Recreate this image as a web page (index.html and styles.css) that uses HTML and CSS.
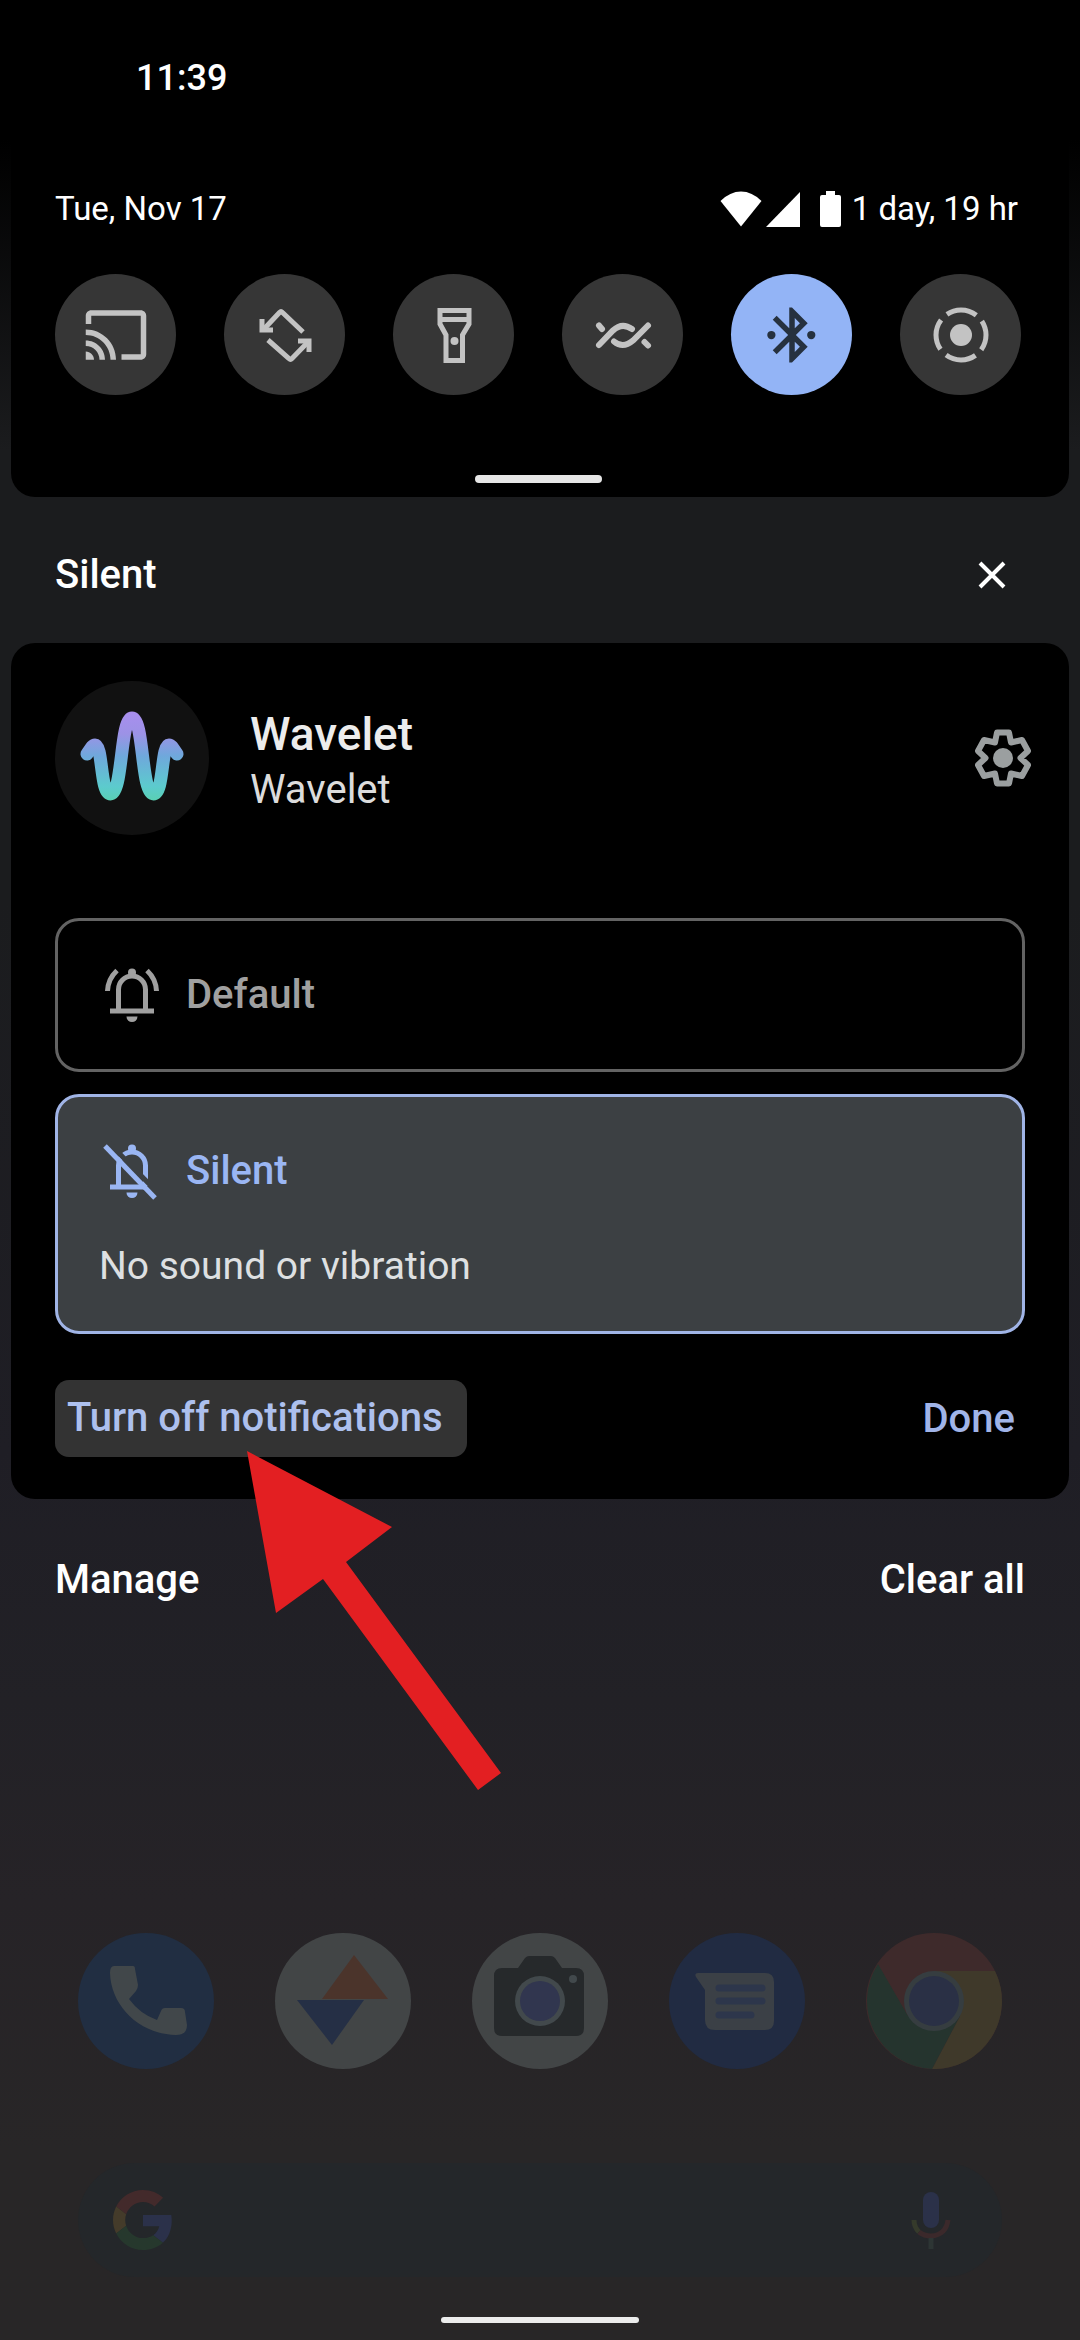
FILE: index.html
```html
<!DOCTYPE html>
<html lang="en">
<head>
  <meta charset="UTF-8">
  <meta name="viewport" content="width=device-width, initial-scale=1">
  <title>Notification shade</title>
  <link rel="stylesheet" href="styles.css">
</head>
<body>
  <div class="status-bar">11:39</div>

  <section class="quick-settings">
    <div class="qs-header">
      <span>Tue, Nov 17</span>
      <div class="system-icons">
        <svg width="42" height="36" viewBox="0 0 42 36"><path d="M21 35.500L0.500 10Q10 0.500 21 0.500T41.500 10Z"/></svg>
        <svg class="signal" width="34" height="36" viewBox="0 0 34 36"><path d="M34 1V36H0Z"/></svg>
        <svg width="22" height="36" viewBox="0 0 22 36"><path d="M6 0h9v4h4q2 0 2 2v28q0 2-2 2H2q-2 0-2-2V6q0-2 2-2h4z"/></svg>
        <span class="battery-text">1 day, 19 hr</span>
      </div>
    </div>

    <div class="tiles">
      <button class="tile" aria-label="Screen cast">
        <svg viewBox="0 0 24 24" fill="currentColor"><path d="M21 3H3c-1.100 0-2 .9-2 2v3h2V5h18v14h-7v2h7c1.100 0 2-.9 2-2V5c0-1.100-.9-2-2-2zM1 18v3h3c0-1.660-1.340-3-3-3zm0-4v2c2.760 0 5 2.240 5 5h2c0-3.870-3.130-7-7-7zm0-4v2c4.970 0 9 4.030 9 9h2c0-6.080-4.930-11-11-11z"/></svg>
      </button>
      <button class="tile" aria-label="Auto-rotate">
        <svg class="line" viewBox="-33 -33 66 66">
          <path d="M-21-6L-5.500-22.500Q-4-24-2.500-22.500L18-3"/>
          <path d="M-23-16V-5H-12"/>
          <path d="M-17 5L4 23.500Q5.500 25 7 23.500L23 7"/>
          <path d="M13 6H24V17"/>
        </svg>
      </button>
      <button class="tile" aria-label="Flashlight">
        <svg class="line" viewBox="-33 -33 66 66">
          <path d="M-14-24.500H15V-11L8.500 0V25.500H-8V0L-14-11Z"/>
          <path d="M-14-15.500H15"/>
          <circle cx="0.500" cy="6" r="4" fill="currentColor" stroke="none"/>
        </svg>
      </button>
      <button class="tile" aria-label="Mobile data">
        <svg class="line round" viewBox="-33 -33 66 66">
          <path d="M-24 10L-10-4.500Q-1-13 9-6"/>
          <path d="M25-9.500L10 5.500Q0 14 -9 6.500"/>
          <path d="M-24-9.500L-21-6"/>
          <path d="M21.500 7L25 10.500"/>
        </svg>
      </button>
      <button class="tile tile-on" aria-label="Bluetooth" aria-pressed="true">
        <svg viewBox="0 0 24 24" fill="currentColor"><path d="M17.710 7.710L12 2h-1v7.590L6.410 5 5 6.410 10.590 12 5 17.590 6.410 19 11 14.410V22h1l5.710-5.710-4.300-4.290 4.300-4.290zM13 5.830l1.880 1.880L13 9.590V5.830zm1.880 10.460L13 18.170v-3.760l1.880 1.880z"/><circle cx="4.500" cy="12" r="1.500"/><circle cx="19" cy="12" r="1.500"/></svg>
      </button>
      <button class="tile" aria-label="Screen record">
        <svg class="line" viewBox="-33 -33 66 66">
          <circle r="25" stroke-dasharray="31.270 8" stroke-dashoffset="15.635"/>
          <circle r="11" fill="currentColor" stroke="none"/>
        </svg>
      </button>
    </div>

    <div class="handle"></div>
  </section>

  <div class="section-header">
    <h2>Silent</h2>
    <button class="close" aria-label="Clear silent notifications">
      <svg width="28" height="28" viewBox="0 0 28 28"><path d="M2 2L26 26M26 2L2 26"/></svg>
    </button>
  </div>

  <section class="card">
    <div class="app-header">
      <svg class="app-icon" viewBox="-77 -77 154 154">
        <defs>
          <linearGradient id="wave" gradientUnits="userSpaceOnUse" x1="0" y1="-46" x2="0" y2="42">
            <stop offset="0" stop-color="#a98eee"/>
            <stop offset=".25" stop-color="#9c92e6"/>
            <stop offset=".5" stop-color="#6fa8dc"/>
            <stop offset=".85" stop-color="#5ccbcd"/>
            <stop offset="1" stop-color="#5ad0b4"/>
          </linearGradient>
        </defs>
        <circle r="77" fill="#111"/>
        <path d="M-45-4C-42-8-40-13-37-13C-29-13-32 36-21.500 36C-9 36-12-40 0-40C12-40 9 36 21.500 36C32 36 29-13 37-13C40-13 42-8 45-4" fill="none" stroke="url(#wave)" stroke-width="13" stroke-linecap="round"/>
      </svg>
      <div class="app-names">
        <h3>Wavelet</h3>
        <p>Wavelet</p>
      </div>
      <button class="gear" aria-label="Notification settings">
        <svg viewBox="-33 -33 66 66">
          <path d="M-6-25.500H6L8-15.500L19-18L25-7L17.500 0L25 7L19 18L8 15.500L6 25.500H-6L-8 15.500L-19 18L-25 7L-17.500 0L-25-7L-19-18L-8-15.500Z"/>
          <circle r="10" fill="currentColor" stroke="none"/>
        </svg>
      </button>
    </div>

    <div class="options">
      <label class="option">
        <input type="radio" name="level" value="default">
        <span class="option-title">
          <svg class="line" viewBox="-33 -33 66 66">
            <circle cy="-22.500" r="4" fill="currentColor" stroke="none"/>
            <path d="M-13.500 15V-5.500a13.500 13.500 0 0 1 27 0V15M-22 16H22"/>
            <path d="M-15-24.500Q-24-16-24.500-4M15-24.500Q24-16 24.500-4"/>
            <path d="M-5.500 21.500H5.500A5.500 5.500 0 0 1-5.500 21.500Z" fill="currentColor" stroke="none"/>
          </svg>
          Default
        </span>
      </label>
      <label class="option">
        <input type="radio" name="level" value="silent" checked>
        <span class="option-title">
          <svg class="line" viewBox="-33 -33 66 66">
            <circle cy="-22.500" r="4" fill="currentColor" stroke="none"/>
            <path d="M-13.500 15V-5.500a13.500 13.500 0 0 1 27 0V15M-22 16H15"/>
            <path d="M-5.500 21.500H5.500A5.500 5.500 0 0 1-5.500 21.500Z" fill="currentColor" stroke="none"/>
            <path class="cut" d="M-23-28L28 24"/>
            <path d="M-27-25L23 27"/>
          </svg>
          Silent
        </span>
        <span class="option-text">No sound or vibration</span>
      </label>
    </div>

    <div class="actions">
      <button class="turn-off">Turn off notifications</button>
      <button class="done">Done</button>
      <svg class="arrow" width="256" height="342" viewBox="0 0 256 342"><path d="M0 0L145 76L99 111L254 322L231 339L76 128L29 162Z"/></svg>
    </div>
  </section>

  <div class="shade-footer">
    <button>Manage</button>
    <button>Clear all</button>
  </div>

  <div class="launcher">
    <div class="dock">
      <a href="#" aria-label="Phone">
        <svg viewBox="0 0 136 136">
          <circle cx="68" cy="68" r="68" fill="#212e42"/>
          <path d="M36 33H55Q57 33 57 36L60 52Q60 55 58 58L51 66Q62 81 79 87L83 78Q84 75 87 75H103Q107 75 107 79L109 92Q109 102 98 102C60 101 33 72 32 40Q32 33 36 33Z" fill="#41474a"/>
        </svg>
      </a>
      <a href="#" aria-label="Wallpapers">
        <svg viewBox="0 0 136 136">
          <circle cx="68" cy="68" r="68" fill="#424546"/>
          <path d="M79 22L113 66H47Z" fill="#4b342b"/>
          <path d="M22 67H89L57 112Z" fill="#252f45"/>
        </svg>
      </a>
      <a href="#" aria-label="Camera">
        <svg viewBox="0 0 136 136">
          <circle cx="68" cy="68" r="68" fill="#424546"/>
          <path d="M30 35H46L53 25Q55 23 57 23H79Q81 23 83 25L90 35H104Q112 35 112 43V95Q112 103 104 103H30Q22 103 22 95V43Q22 35 30 35Z" fill="#26292b"/>
          <circle cx="68" cy="68" r="25" fill="#42494c"/>
          <circle cx="68" cy="68" r="20" fill="#31364f"/>
          <circle cx="101" cy="46" r="4" fill="#42494c"/>
        </svg>
      </a>
      <a href="#" aria-label="Messages">
        <svg viewBox="0 0 136 136">
          <circle cx="68" cy="68" r="68" fill="#212b42"/>
          <path d="M29 40H96Q105 40 105 49V88Q105 97 96 97H46Q36 97 36 87V57L27 44Q25 40 29 40Z" fill="#3b4046"/>
          <path d="M50 55H93M50 68H93M50 82H82" stroke="#2d364b" stroke-width="7" stroke-linecap="round"/>
        </svg>
      </a>
      <a href="#" aria-label="Chrome">
        <svg viewBox="0 0 136 136">
          <circle cx="68" cy="68" r="68" fill="#3e2a2b"/>
          <path d="M68 38H129A68 68 0 0 1 66 136L94 83Z" fill="#3f392a"/>
          <path d="M12 31L42 83H94L66 136A68 68 0 0 1 12 31Z" fill="#25342e"/>
          <circle cx="68" cy="68" r="30" fill="#363d40"/>
          <circle cx="68" cy="68" r="25" fill="#2a3045"/>
        </svg>
      </a>
    </div>

    <form class="search">
      <svg width="60" height="60" viewBox="0 0 48 48">
        <path fill="#432a2b" d="M24 9.500c3.540 0 6.710 1.220 9.210 3.600l6.850-6.850C35.900 2.380 30.470 0 24 0 14.620 0 6.510 5.380 2.560 13.220l7.980 6.190C12.430 13.720 17.740 9.500 24 9.500z"/>
        <path fill="#2b314a" d="M46.980 24.550c0-1.570-.15-3.090-.38-4.550H24v9.020h12.940c-.58 2.960-2.260 5.480-4.780 7.180l7.730 6c4.510-4.180 7.090-10.360 7.090-17.650z"/>
        <path fill="#443b2a" d="M10.530 28.590c-.48-1.450-.76-2.990-.76-4.590s.27-3.140.76-4.590l-7.980-6.190C.92 16.460 0 20.120 0 24c0 3.880.92 7.540 2.560 10.780l7.970-6.190z"/>
        <path fill="#26382d" d="M24 48c6.480 0 11.930-2.130 15.890-5.810l-7.730-6c-2.150 1.450-4.920 2.300-8.160 2.300-6.260 0-11.570-4.220-13.470-9.910l-7.980 6.190C6.510 42.620 14.620 48 24 48z"/>
      </svg>
      <input type="text" aria-label="Search">
      <svg width="40" height="60" viewBox="0 0 40 60" fill="none" stroke-width="5">
        <path d="M20 10V30" stroke="#2b3149" stroke-width="16" stroke-linecap="round"/>
        <path d="M3 30Q3 37 8 42" stroke="#353a2b"/>
        <path d="M8 42Q13 46 20 46Q35 45 37 30" stroke="#3b292b"/>
        <path d="M20 48V59" stroke="#2d3534"/>
      </svg>
    </form>

    <div class="home-bar"></div>
  </div>
</body>
</html>
```
FILE: styles.css
```css
* {
  box-sizing: border-box;
}

body {
  margin: 0;
  min-height: 100vh;
  display: flex;
  flex-direction: column;
  font-family: Roboto, sans-serif;
  font-size: 40px;
  line-height: 48px;
  color: #fff;
  background: linear-gradient(#000 0, #000 140px, #1b1c1e 450px, #1b1c1e 900px, #1f1e25 1450px, #222126 1700px, #262327 1900px, #282627 2150px, #282627 100%);
}

h2, h3, p {
  margin: 0;
  font-size: inherit;
  font-weight: 500;
}

button {
  padding: 0;
  border: 0;
  background: none;
  color: inherit;
  font: inherit;
  font-weight: 500;
}

svg {
  display: block;
}

.line {
  fill: none;
  stroke: currentColor;
  stroke-width: 5;
}

.round {
  stroke-width: 6;
  stroke-linecap: round;
}

.status-bar {
  padding: 54px 136px 0;
  font-size: 36px;
  font-weight: 500;
}

/* quick settings */
.quick-settings {
  margin: 0 11px;
  padding: 83px 48px 14px 44px;
  background: #000;
  border-radius: 0 0 24px 24px;
}

.qs-header {
  display: flex;
  justify-content: space-between;
  font-size: 33px;
}

.system-icons {
  display: flex;
  align-items: center;
  gap: 4px;
  padding-right: 3px;
  fill: #fff;
}

.signal {
  margin-right: 16px;
}

.battery-text {
  margin-left: 6px;
}

.tiles {
  display: flex;
  justify-content: space-between;
  margin-top: 41px;
}

.tile {
  display: flex;
  align-items: center;
  justify-content: center;
  width: 121px;
  height: 121px;
  border-radius: 50%;
  background: #363636;
  color: #c3c3c3;
}

.tile svg {
  width: 66px;
  height: 66px;
}

.tile-on {
  background: #93b4f6;
  color: #26313f;
}

.handle {
  width: 127px;
  height: 8px;
  margin: 80px auto 0;
  border-radius: 4px;
  background: #e6e6e6;
}

/* silent section */
.section-header {
  display: flex;
  align-items: center;
  justify-content: space-between;
  padding: 54px 74px 44px 55px;
}

.close svg {
  fill: none;
  stroke: #fff;
  stroke-width: 4;
}

.card {
  margin: 0 11px;
  padding: 38px 44px 42px;
  background: #000;
  border-radius: 24px;
}

.app-header {
  display: flex;
  align-items: center;
}

.app-icon {
  width: 154px;
  height: 154px;
}

.app-names {
  flex: 1;
  padding: 8px 0 0 41px;
  line-height: 56px;
}

.app-names h3 {
  font-size: 46px;
  color: #ececec;
}

.app-names p {
  font-weight: 400;
  color: #dcdcdc;
}

.gear {
  margin-right: -11px;
  color: #9b9fa0;
}

.gear svg {
  width: 66px;
  height: 66px;
  fill: none;
  stroke: currentColor;
  stroke-width: 6;
  stroke-linejoin: round;
}

.options {
  display: flex;
  flex-direction: column;
  gap: 22px;
  margin-top: 83px;
}

.option {
  display: block;
  padding: 41px;
  border: 3px solid #636363;
  border-radius: 24px;
  color: #a0a0a0;
}

.option input {
  position: absolute;
  opacity: 0;
}

.option:has(input:checked) {
  border-color: #a0b4e6;
  background: #3c4043;
  color: #9ab6f3;
}

.option-title {
  display: flex;
  align-items: center;
  gap: 21px;
  font-weight: 500;
}

.option-title svg {
  width: 66px;
  height: 66px;
}

.option .cut {
  stroke: #3c4043;
}

.option-text {
  display: block;
  margin-top: 38px;
  font-size: 39px;
  color: #dee0e2;
}

.actions {
  position: relative;
  display: flex;
  justify-content: space-between;
  margin-top: 46px;
}

.turn-off {
  padding: 14px 24px 15px 12px;
  border-radius: 14px;
  background: #333;
  color: #adc0ee;
}

.done {
  padding: 0 10px;
  color: #a0b4e8;
}

/* pointer to the turn off button */
.arrow {
  position: absolute;
  top: 71px;
  left: 192px;
  fill: #e31f22;
  pointer-events: none;
}

.shade-footer {
  display: flex;
  justify-content: space-between;
  padding: 57px 55px;
}

/* home screen behind the shade */
.launcher {
  margin-top: auto;
  padding: 0 78px 17px;
}

.dock {
  display: flex;
  justify-content: space-between;
}

.dock svg {
  width: 136px;
  height: 136px;
}

.search {
  display: flex;
  align-items: center;
  height: 114px;
  margin: 94px 0 40px;
  padding: 0 51px 0 35px;
  border-radius: 57px;
  background: #24272a;
}

.search input {
  flex: 1;
  min-width: 0;
  border: 0;
  background: none;
  color: inherit;
  font: inherit;
}

.home-bar {
  width: 198px;
  height: 6px;
  margin: 0 auto;
  border-radius: 3px;
  background: #ececec;
}
```
